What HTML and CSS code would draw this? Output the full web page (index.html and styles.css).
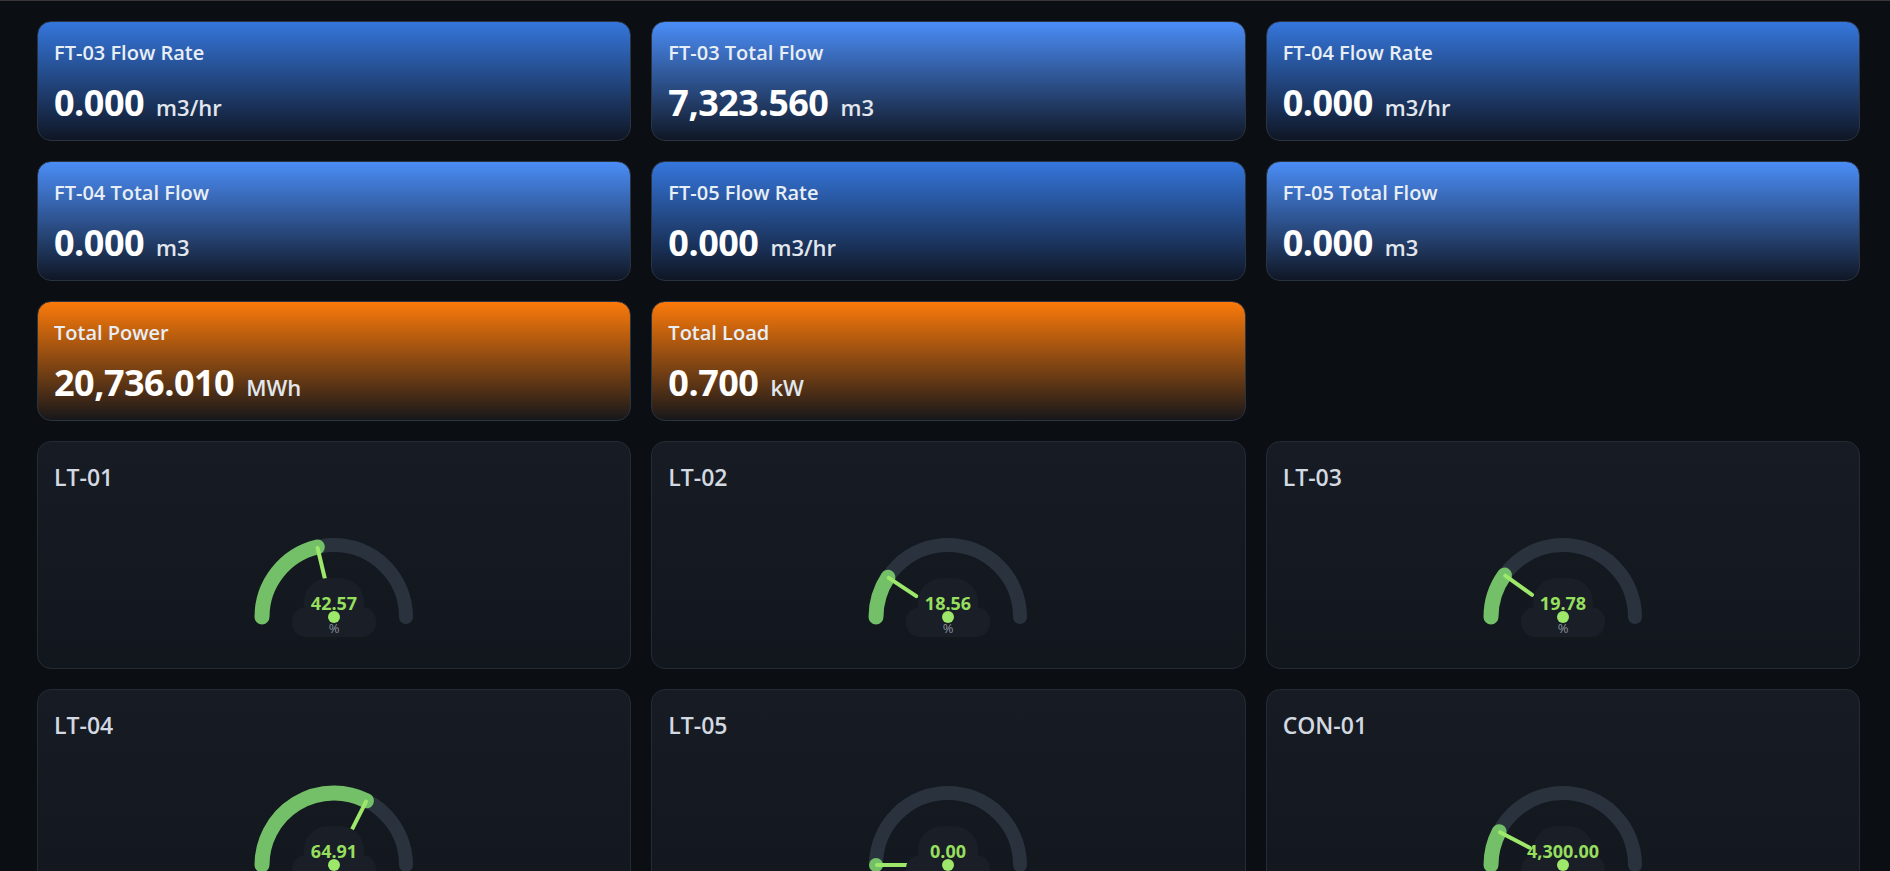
FILE: index.html
```html
<!DOCTYPE html>
<html lang="en">
<head>
<meta charset="utf-8">
<title>Plant Dashboard</title>
<link rel="stylesheet" href="styles.css">
</head>
<body>
<main class="grid">
  <section class="stat stat-blue">
    <div class="stat-title">FT-03 Flow Rate</div>
    <div class="stat-value"><span class="num">0.000</span><span class="unit">m3/hr</span></div>
  </section>
  <section class="stat stat-blue-light">
    <div class="stat-title">FT-03 Total Flow</div>
    <div class="stat-value"><span class="num">7,323.560</span><span class="unit">m3</span></div>
  </section>
  <section class="stat stat-blue">
    <div class="stat-title">FT-04 Flow Rate</div>
    <div class="stat-value"><span class="num">0.000</span><span class="unit">m3/hr</span></div>
  </section>

  <section class="stat stat-blue-light">
    <div class="stat-title">FT-04 Total Flow</div>
    <div class="stat-value"><span class="num">0.000</span><span class="unit">m3</span></div>
  </section>
  <section class="stat stat-blue">
    <div class="stat-title">FT-05 Flow Rate</div>
    <div class="stat-value"><span class="num">0.000</span><span class="unit">m3/hr</span></div>
  </section>
  <section class="stat stat-blue-light">
    <div class="stat-title">FT-05 Total Flow</div>
    <div class="stat-value"><span class="num">0.000</span><span class="unit">m3</span></div>
  </section>

  <section class="stat stat-orange">
    <div class="stat-title">Total Power</div>
    <div class="stat-value"><span class="num">20,736.010</span><span class="unit">MWh</span></div>
  </section>
  <section class="stat stat-orange">
    <div class="stat-title">Total Load</div>
    <div class="stat-value"><span class="num">0.700</span><span class="unit">kW</span></div>
  </section>
  <div class="empty"></div>

  <section class="gauge-card">
    <div class="gauge-title">LT-01</div>
    <svg class="gauge" width="200" height="120" viewBox="0 0 200 120">
      <path class="g-track" d="M28 90 A72 72 0 0 1 172 90"/>
      <path class="g-progress" d="M28 90 A72 72 0 0 1 83.35 19.95"/>
      <line class="g-pointer" x1="91.21" y1="53.03" x2="83.58" y2="20.92"/>
      <rect class="g-bg" x="70" y="51" width="60" height="50" rx="24"/>
      <rect class="g-bg" x="58" y="80" width="84" height="30" rx="14"/>
      <text class="g-value" x="100" y="83">42.57</text>
      <circle class="g-anchor" cx="100" cy="90" r="6"/>
      <text class="g-unit" x="100" y="106">%</text>
    </svg>
  </section>
  <section class="gauge-card">
    <div class="gauge-title">LT-02</div>
    <svg class="gauge" width="200" height="120" viewBox="0 0 200 120">
      <path class="g-track" d="M28 90 A72 72 0 0 1 172 90"/>
      <path class="g-progress" d="M28 90 A72 72 0 0 1 39.89 50.36"/>
      <line class="g-pointer" x1="68.28" y1="69.08" x2="40.73" y2="50.91"/>
      <rect class="g-bg" x="70" y="51" width="60" height="50" rx="24"/>
      <rect class="g-bg" x="58" y="80" width="84" height="30" rx="14"/>
      <text class="g-value" x="100" y="83">18.56</text>
      <circle class="g-anchor" cx="100" cy="90" r="6"/>
      <text class="g-unit" x="100" y="106">%</text>
    </svg>
  </section>
  <section class="gauge-card">
    <div class="gauge-title">LT-03</div>
    <svg class="gauge" width="200" height="120" viewBox="0 0 200 120">
      <path class="g-track" d="M28 90 A72 72 0 0 1 172 90"/>
      <path class="g-progress" d="M28 90 A72 72 0 0 1 41.46 48.09"/>
      <line class="g-pointer" x1="69.10" y1="67.88" x2="42.27" y2="48.67"/>
      <rect class="g-bg" x="70" y="51" width="60" height="50" rx="24"/>
      <rect class="g-bg" x="58" y="80" width="84" height="30" rx="14"/>
      <text class="g-value" x="100" y="83">19.78</text>
      <circle class="g-anchor" cx="100" cy="90" r="6"/>
      <text class="g-unit" x="100" y="106">%</text>
    </svg>
  </section>

  <section class="gauge-card">
    <div class="gauge-title">LT-04</div>
    <svg class="gauge" width="200" height="120" viewBox="0 0 200 120">
      <path class="g-track" d="M28 90 A72 72 0 0 1 172 90"/>
      <path class="g-progress" d="M28 90 A72 72 0 0 1 132.51 25.75"/>
      <line class="g-pointer" x1="117.16" y1="56.09" x2="132.06" y2="26.65"/>
      <rect class="g-bg" x="70" y="51" width="60" height="50" rx="24"/>
      <rect class="g-bg" x="58" y="80" width="84" height="30" rx="14"/>
      <text class="g-value" x="100" y="83">64.91</text>
      <circle class="g-anchor" cx="100" cy="90" r="6"/>
    </svg>
  </section>
  <section class="gauge-card">
    <div class="gauge-title">LT-05</div>
    <svg class="gauge" width="200" height="120" viewBox="0 0 200 120">
      <path class="g-track" d="M28 90 A72 72 0 0 1 172 90"/>
      <circle class="g-dot" cx="28" cy="90" r="7"/>
      <line class="g-pointer" x1="62" y1="90" x2="29" y2="90"/>
      <rect class="g-bg" x="70" y="51" width="60" height="50" rx="24"/>
      <rect class="g-bg" x="58" y="80" width="84" height="30" rx="14"/>
      <text class="g-value" x="100" y="83">0.00</text>
      <circle class="g-anchor" cx="100" cy="90" r="6"/>
    </svg>
  </section>
  <section class="gauge-card">
    <div class="gauge-title">CON-01</div>
    <svg class="gauge" width="200" height="120" viewBox="0 0 200 120">
      <path class="g-track" d="M28 90 A72 72 0 0 1 172 90"/>
      <path class="g-progress" d="M28 90 A72 72 0 0 1 36.14 56.76"/>
      <line class="g-pointer" x1="66.29" y1="72.46" x2="37.02" y2="57.22"/>
      <rect class="g-bg" x="70" y="51" width="60" height="50" rx="24"/>
      <rect class="g-bg" x="58" y="80" width="84" height="30" rx="14"/>
      <text class="g-value" x="100" y="83">4,300.00</text>
      <circle class="g-anchor" cx="100" cy="90" r="6"/>
    </svg>
  </section>
</main>
</body>
</html>
```

FILE: styles.css
```css
html {
  background: #0b0e13;
  scrollbar-width: none;
}

html::-webkit-scrollbar {
  display: none;
}

body {
  margin: 0;
  background: #0b0e13;
  border-top: 1px solid #3a3638;
  font-family: "Open Sans", "Noto Sans", "DejaVu Sans", sans-serif;
  color: #e8eef6;
}

.grid {
  display: grid;
  grid-template-columns: repeat(3, 1fr);
  gap: 20px;
  padding: 20px 30px 20px 37px;
}

.stat {
  height: 120px;
  box-sizing: border-box;
  border: 1px solid #2a3341;
  border-radius: 14px;
  padding: 18px 16px 0;
}

.stat-blue {
  background: linear-gradient(180deg, #3576dc 0%, #0f1624 100%);
}

.stat-blue-light {
  background: linear-gradient(180deg, #4b8df7 0%, #101725 100%);
}

.stat-orange {
  background: linear-gradient(180deg, #fb7a0a 0%, #17171a 100%);
}

.stat-title {
  font-size: 20px;
  font-weight: 600;
  line-height: 26px;
  color: #e8eef6;
}

.stat-value {
  display: flex;
  align-items: baseline;
  gap: 12px;
  margin-top: 19px;
  line-height: 36px;
}

.num {
  font-size: 36px;
  font-weight: 700;
  color: #ffffff;
  letter-spacing: -0.5px;
}

.unit {
  font-size: 22px;
  font-weight: 600;
  color: #e2e7ee;
}

.gauge-card {
  height: 228px;
  box-sizing: border-box;
  border: 1px solid #242b35;
  border-radius: 14px;
  background: linear-gradient(180deg, #171c24 0%, #12161d 100%);
  padding: 20px 16px 0;
  display: flex;
  flex-direction: column;
}

.gauge-title {
  font-size: 23px;
  font-weight: 600;
  line-height: 30px;
  color: #d3d9e1;
}

.gauge {
  align-self: center;
  margin-top: 35px;
  overflow: visible;
}

.g-track {
  fill: none;
  stroke: #29323d;
  stroke-width: 14;
  stroke-linecap: round;
}

.g-progress {
  fill: none;
  stroke: #73c068;
  stroke-width: 15;
  stroke-linecap: round;
}

.g-dot {
  fill: #73c068;
}

.g-pointer {
  stroke: #9de76a;
  stroke-width: 4;
  stroke-linecap: round;
}

.g-bg {
  fill: #191e27;
}

.g-anchor {
  fill: #9de76a;
}

.g-value {
  font-family: "Open Sans", "Noto Sans", sans-serif;
  font-size: 18px;
  font-weight: 700;
  fill: #96df5e;
  text-anchor: middle;
}

.g-unit {
  font-family: "Open Sans", "Noto Sans", sans-serif;
  font-size: 13px;
  fill: #8a929c;
  text-anchor: middle;
}
```
